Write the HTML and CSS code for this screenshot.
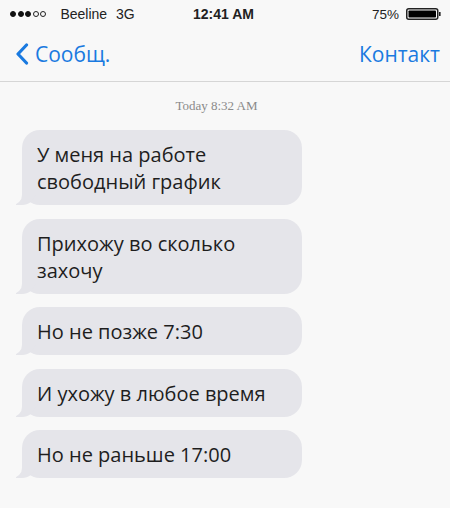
FILE: index.html
```html
<!DOCTYPE html>
<html lang="ru">
<head>
<meta charset="utf-8">
<link rel="stylesheet" href="styles.css">
</head>
<body>
<div class="screen">
  <div class="status">
    <div class="status-left">
      <span class="dots"><i class="dot on"></i><i class="dot on"></i><i class="dot on"></i><i class="dot"></i><i class="dot"></i></span>
      <span class="carrier">Beeline</span>
      <span class="net">3G</span>
    </div>
    <div class="time">12:41 AM</div>
    <div class="status-right">
      <span class="pct">75%</span>
      <svg class="battery" width="36" height="12" viewBox="0 0 36 12">
        <rect x="0.75" y="0.75" width="31" height="10.5" rx="2" fill="none" stroke="#222" stroke-width="1.5"/>
        <rect x="2.5" y="2.5" width="27.5" height="7" rx="0.8" fill="#000"/>
        <rect x="33" y="4" width="1.6" height="4" fill="#222"/>
      </svg>
    </div>
  </div>
  <div class="nav">
    <div class="back">
      <svg class="chev" width="14" height="22" viewBox="0 0 14 22">
        <path d="M11.5 2 L3 11 L11.5 20" fill="none" stroke="#1a7ae0" stroke-width="3.2" stroke-linecap="round" stroke-linejoin="round"/>
      </svg>
      <span>Сообщ.</span>
    </div>
    <div class="contact">Контакт</div>
  </div>
  <div class="thread">
    <div class="stamp">Today 8:32 AM</div>
    <div class="bubble">У меня на работе<br>свободный график</div>
    <div class="bubble">Прихожу во сколько<br>захочу</div>
    <div class="bubble">Но не позже 7:30</div>
    <div class="bubble">И ухожу в любое время</div>
    <div class="bubble">Но не раньше 17:00</div>
  </div>
</div>
</body>
</html>
```
FILE: styles.css
```css
* { box-sizing: border-box; }
html, body { margin: 0; padding: 0; }
body {
  width: 450px;
  height: 508px;
  background: #f8f8f8;
  overflow: hidden;
}
.screen { width: 450px; }

.status {
  height: 28px;
  display: flex;
  align-items: center;
  justify-content: space-between;
  padding: 0 8px 0 10px;
  font-family: "Liberation Sans", Arial, sans-serif;
  font-size: 14px;
  color: #222;
}
.status-left { display: flex; align-items: center; width: 170px; }
.dots { display: flex; gap: 1.6px; margin-right: 14px; }
.dot {
  display: block;
  width: 6px; height: 6px;
  border-radius: 50%;
  border: 1px solid #222;
}
.dot.on { background: #111; border-color: #111; }
.carrier { margin-right: 9px; }
.time { font-weight: bold; font-size: 14px; margin-right: 5px; }
.status-right { display: flex; align-items: center; justify-content: flex-end; width: 170px; gap: 7px; font-size: 13.5px; }

.nav {
  height: 54px;
  display: flex;
  align-items: center;
  justify-content: space-between;
  padding: 0 10px 2px 15px;
  border-bottom: 1px solid #d6d6d6;
  font-family: "Open Sans", "Noto Sans", sans-serif;
  font-size: 21px;
  color: #1a7ae0;
}
.back { display: flex; align-items: center; gap: 6px; }
.chev { display: block; }

.thread {
  display: flex;
  flex-direction: column;
  align-items: flex-start;
  gap: 13.5px;
  padding: 16px 0 0 22px;
}
.stamp {
  align-self: stretch;
  text-align: center;
  padding-right: 39px;
  font-family: "Liberation Serif", "Times New Roman", serif;
  font-size: 13px;
  line-height: 16px;
  color: #8a8a8a;
  margin-bottom: 2.5px;
}
.bubble {
  position: relative;
  width: 280px;
  background: #e5e5ea;
  border-radius: 18px;
  padding: 11px 15px 10px;
  font-family: "Open Sans", "Noto Sans", sans-serif;
  font-size: 20px;
  line-height: 27px;
  color: #1e1e1e;
}
.bubble::before {
  content: "";
  position: absolute;
  bottom: 0;
  left: -6px;
  width: 20px;
  height: 20px;
  background: #e5e5ea;
  border-bottom-right-radius: 14px;
}
.bubble::after {
  content: "";
  position: absolute;
  bottom: 0;
  left: -10px;
  width: 10px;
  height: 20px;
  background: #f8f8f8;
  border-bottom-right-radius: 10px;
}
```
